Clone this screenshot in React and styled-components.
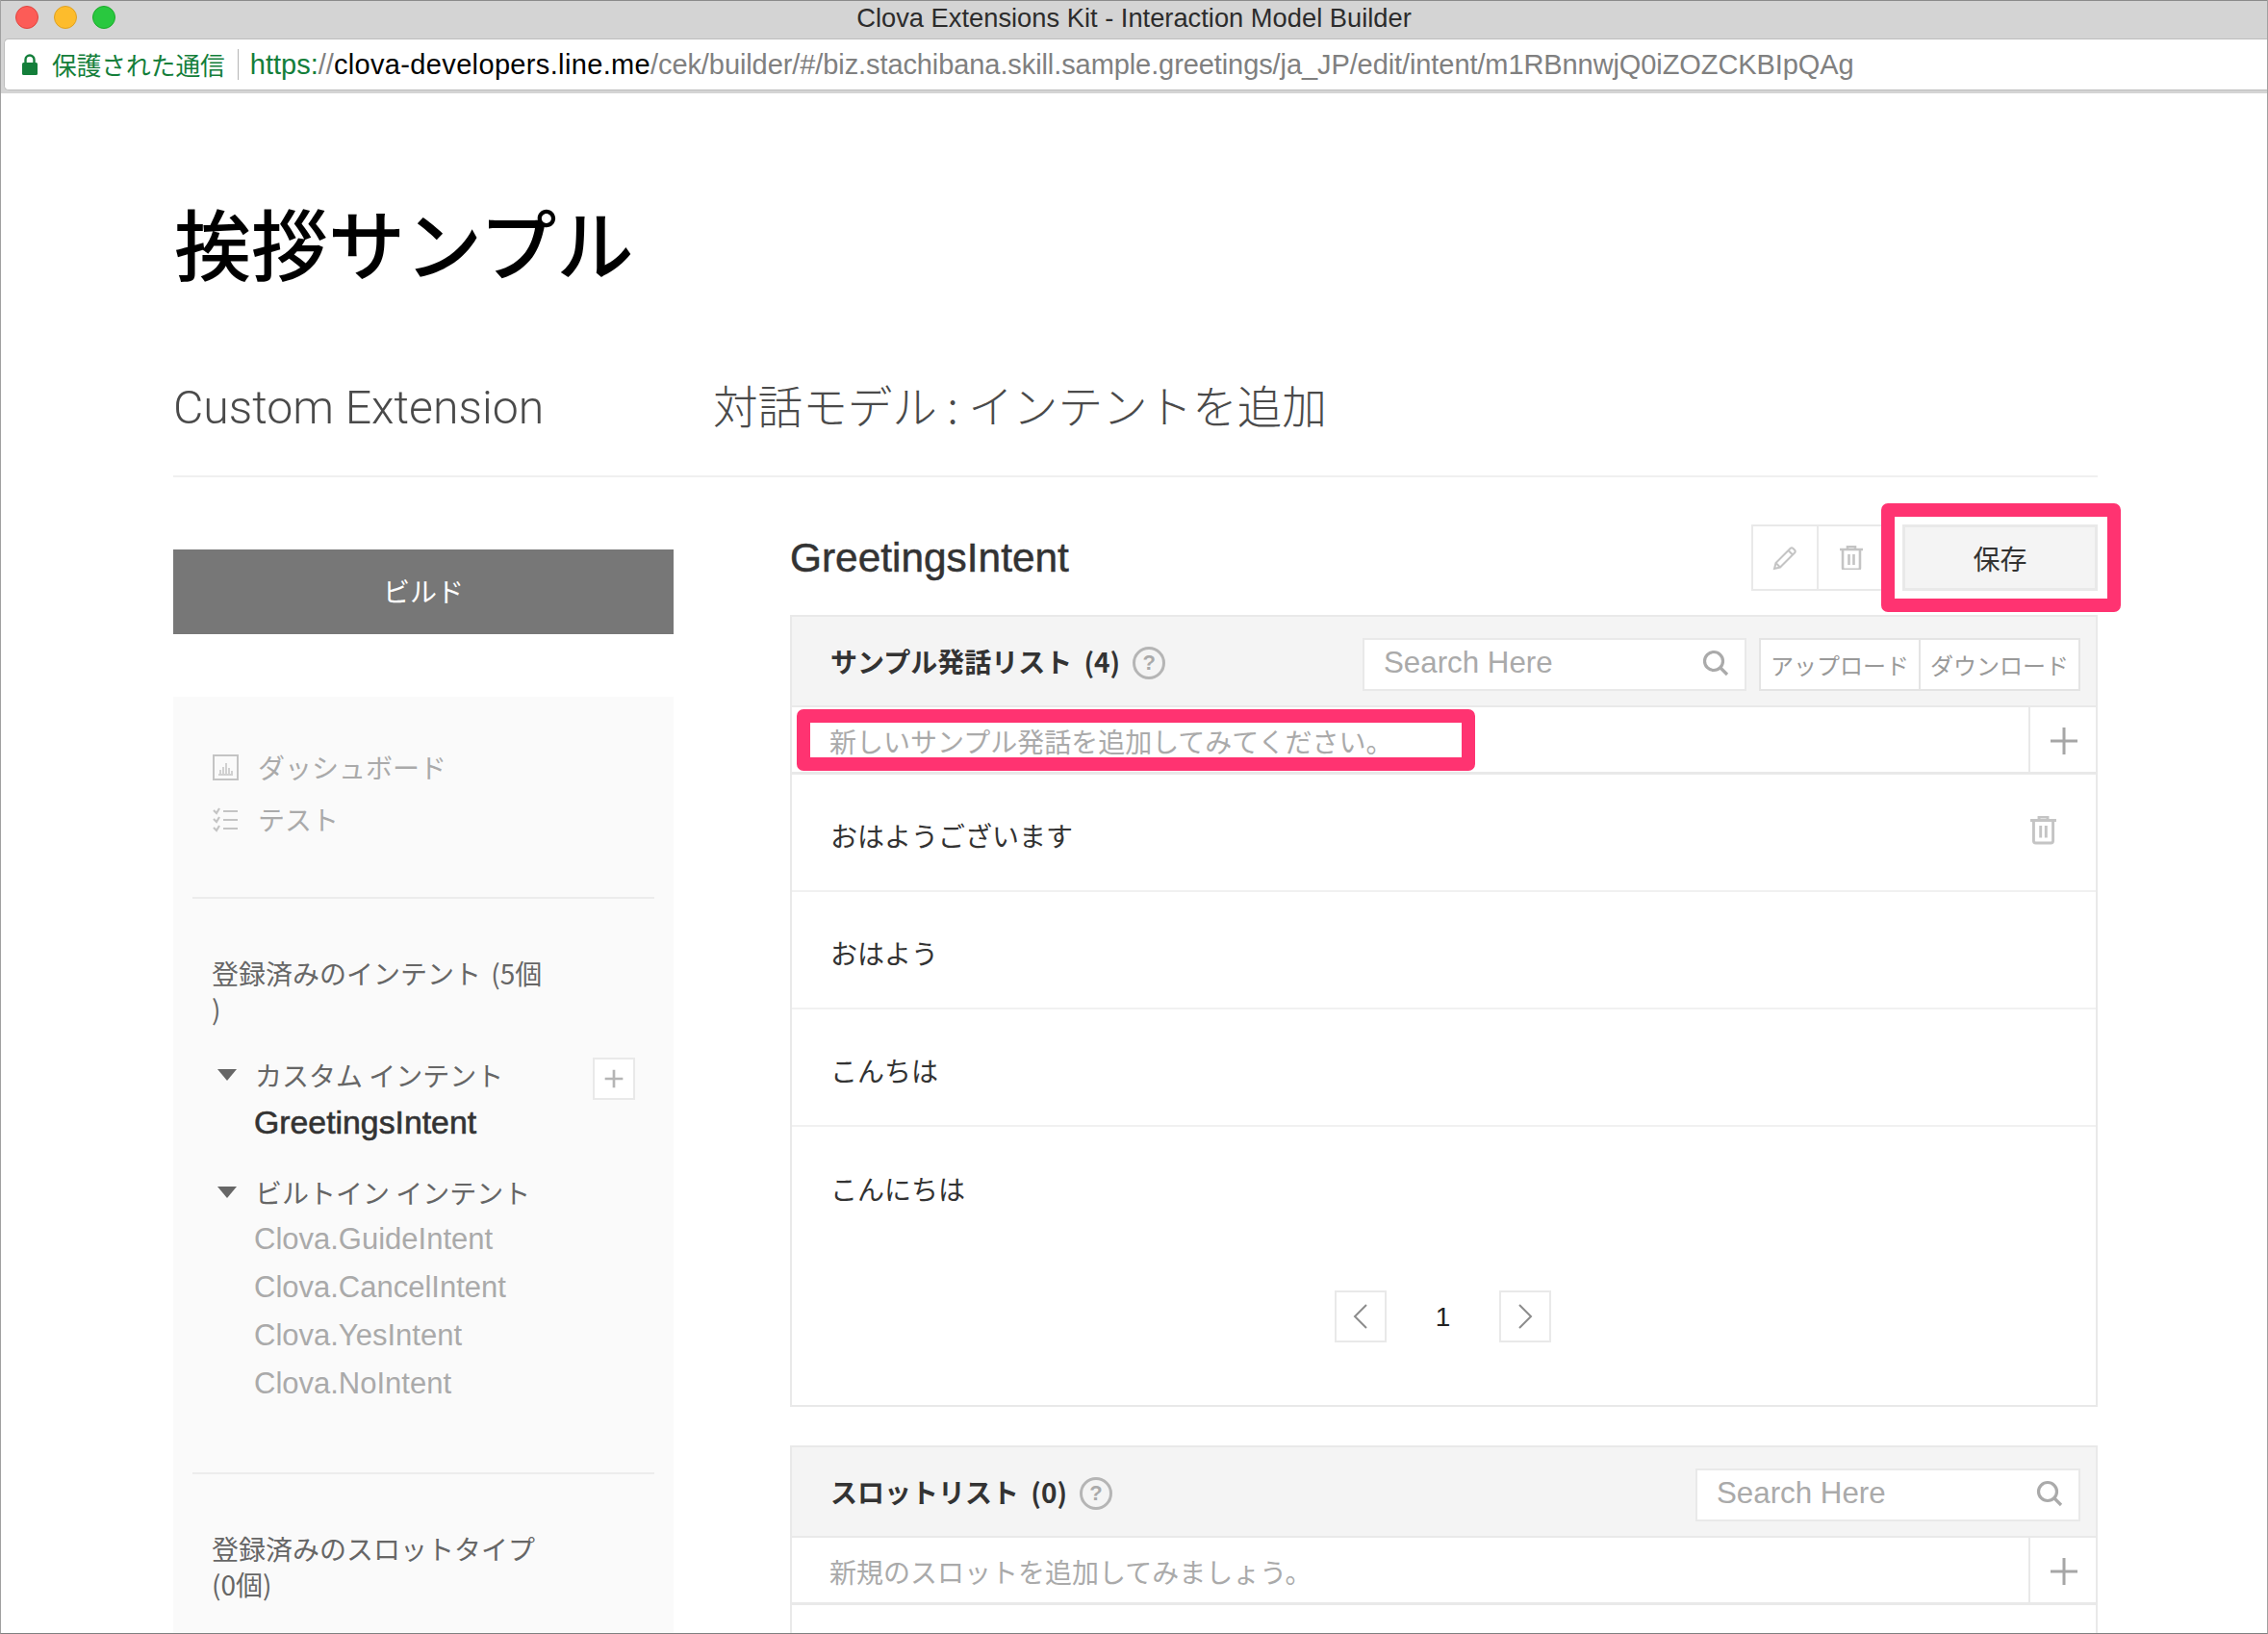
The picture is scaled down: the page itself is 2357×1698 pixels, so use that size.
import React from "react";
import styled, { createGlobalStyle } from "styled-components";

const SANS = `"Liberation Sans", "Noto Sans CJK JP", sans-serif`;
const JP = `"Noto Sans CJK JP", "Liberation Sans", sans-serif`;
const LINE = "#e9e9e9";

const Global = createGlobalStyle`
  html, body { margin: 0; padding: 0; background: #fff; }
  * { box-sizing: border-box; }
  body { font-family: ${SANS}; overflow: hidden; }
`;

const Win = styled.div`
  position: relative;
  width: 2357px;
  height: 1698px;
  overflow: hidden;
  background: #fff;
  display: flex;
  flex-direction: column;
  border-left: 1px solid #a0a0a0;
  border-right: 1px solid #a0a0a0;
  border-bottom: 1px solid #808080;
`;
const TitleBar = styled.div`
  height: 40px;
  flex: none;
  background: #d4d4d4;
  border-top: 1px solid #8a8a8a;
  display: flex;
  align-items: center;
  padding-left: 15px;
  position: relative;
`;
const Light = styled.span`
  width: 24px;
  height: 24px;
  margin-top: -6px;
  border-radius: 50%;
  margin-right: 16px;
  background: ${(p) => p.$c};
  border: 1px solid ${(p) => p.$b};
`;
const WinTitle = styled.div`
  position: absolute;
  left: 0;
  right: 0;
  top: 0;
  height: 36px;
  line-height: 36px;
  text-align: center;
  font-size: 27.3px;
  color: #2c2c2c;
`;
const AddrWrap = styled.div`
  flex: none;
  height: 57px;
  background: #d4d4d4;
  padding: 0 0 3px 3px;
`;
const Addr = styled.div`
  height: 54px;
  background: #fff;
  border: 1px solid #bdbdbd;
  border-radius: 5px 0 0 5px;
  border-right: none;
  display: flex;
  align-items: center;
  padding-left: 18px;
  font-size: 29px;
  white-space: nowrap;
`;
const Secure = styled.span`
  font-family: ${JP};
  font-size: 25.7px;
  color: #137e3a;
  margin-left: 15px;
  margin-top: -2px;
`;
const Sep = styled.span`
  width: 1px;
  height: 32px;
  background: #b5b5b5;
  margin: 0 12px 0 13px;
`;
const UrlText = styled.span`
  margin-top: 1px;
`;
const Url = styled.span`
  color: ${(p) => p.$c};
  letter-spacing: ${(p) => p.$ls || 0}px;
`;

const Content = styled.div`
  flex: 1;
  min-height: 0;
  padding: 0 176px 0 179px;
  display: flex;
  flex-direction: column;
`;
const PageTitle = styled.h1`
  margin: 0;
  height: 108px;
  margin-top: 99px;
  flex: none;
  font-family: ${JP};
  font-size: 80px;
  line-height: 108px;
  font-weight: 500;
  color: #000;
  padding-left: 1px;
`;
const Crumbs = styled.div`
  flex: none;
  height: 192px;
  padding-top: 48px;
  border-bottom: 2px solid #f0f0f0;
  display: flex;
  align-items: center;
`;
const CrumbA = styled.div`
  width: 561px;
  font-family: Roboto, ${SANS};
  font-weight: 300;
  font-size: 48.2px;
  color: #4a4a4a;
`;
const CrumbB = styled.div`
  margin-top: -8px;
  font-family: ${JP};
  font-weight: 300;
  font-size: 46.6px;
  color: #4a4a4a;
`;
const Columns = styled.div`
  display: flex;
  gap: 120px;
  flex: 1;
  min-height: 0;
`;
const Side = styled.aside`
  width: 520px;
  flex: none;
  padding-top: 75px;
  margin-right: 1px;
  display: flex;
  flex-direction: column;
`;
const Build = styled.div`
  height: 88px;
  background: #777;
  color: #fff;
  display: flex;
  align-items: center;
  justify-content: center;
  font-family: ${JP};
  font-size: 28px;
  padding-bottom: 2px;
  flex: none;
`;
const SidePanel = styled.div`
  margin-top: 65px;
  flex: 1;
  background: #fafafa;
  padding: 0 20px;
`;
const NavList = styled.div`
  height: 210px;
  padding: 55px 0 0 21px;
  border-bottom: 2px solid #ececec;
`;
const NavItem = styled.div`
  display: flex;
  align-items: center;
  height: 36px;
  margin-bottom: 18px;
  font-family: ${JP};
  font-size: 28px;
  color: #aaa;
  gap: 20px;
`;
const NavIcon = styled.svg`
  width: 27px;
  height: 27px;
  flex: none;
`;
const SideSection = styled.div`
  padding: 59px 20px 0 20px;
`;
const SideHead = styled.div`
  width: 360px;
  font-family: ${JP};
  font-size: 28px;
  line-height: 37px;
  color: #666;
  word-spacing: 4px;
`;
const Group = styled.div`
  margin-top: ${(p) => p.$mt}px;
  position: relative;
`;
const GroupHead = styled.div`
  display: flex;
  align-items: center;
  height: 48px;
  font-family: ${JP};
  font-size: 28px;
  color: #666;
  word-spacing: 0;
`;
const Tri = styled.span`
  width: 0;
  height: 0;
  margin: 0 19px 0 6px;
  border-left: 10px solid transparent;
  border-right: 10px solid transparent;
  border-top: 12px solid #666;
`;
const Intent = styled.div`
  height: ${(p) => (p.$active ? "49px" : "50px")};
  line-height: ${(p) => (p.$active ? "50px" : "50px")};
  padding-left: 44px;
  font-family: ${SANS};
  font-size: ${(p) => (p.$active ? "33.8px" : "31px")};
  color: ${(p) => (p.$active ? "#333" : "#aaa")};
  -webkit-text-stroke: ${(p) => (p.$active ? "0.6px #333" : "0")};
`;
const MiniPlus = styled.div`
  position: absolute;
  right: 0;
  top: 6px;
  width: 44px;
  height: 44px;
  background: #fff;
  border: 2px solid #e9e9e9;
  display: flex;
  align-items: center;
  justify-content: center;
`;
const SideRule = styled.div`
  height: 2px;
  background: #ececec;
  margin-top: 67px;
`;

const Main = styled.main`
  flex: 1;
  min-width: 0;
  padding-top: 49px;
`;
const MainHead = styled.div`
  display: flex;
  align-items: center;
  justify-content: space-between;
  height: 69px;
`;
const Name = styled.h2`
  margin: 0;
  font-family: ${SANS};
  font-size: 42.4px;
  font-weight: 400;
  color: #333;
  -webkit-text-stroke: 0.5px #333;
`;
const Actions = styled.div`
  display: flex;
  height: 69px;
`;
const IconBtn = styled.div`
  width: ${(p) => p.$w}px;
  height: 69px;
  border: 2px solid ${LINE};
  border-right: ${(p) => (p.$open ? "none" : `2px solid ${LINE}`)};
  margin-right: ${(p) => (p.$open ? "0" : "-2px")};
  display: flex;
  align-items: center;
  justify-content: center;
  background: #fff;
`;
const SaveBtn = styled.div`
  width: 203px;
  height: 69px;
  margin-left: 20px;
  background: #f4f4f4;
  border: 3px solid ${LINE};
  display: flex;
  align-items: center;
  justify-content: center;
  font-family: ${JP};
  font-size: 28px;
  color: #333;
`;
const Panel = styled.section`
  margin-top: ${(p) => p.$mt}px;
  border: 2px solid ${LINE};
  height: ${(p) => p.$h || "auto"};
`;
const PanelHead = styled.div`
  height: 94px;
  background: #f4f4f4;
  border-bottom: 2px solid ${LINE};
  display: flex;
  align-items: center;
  padding: 0 16px 0 40px;
`;
const PanelTitle = styled.div`
  font-family: ${JP};
  font-size: 28px;
  font-weight: 700;
  color: #333;
  white-space: nowrap;
  word-spacing: 6px;
`;
const Help = styled.span`
  width: 34px;
  height: 34px;
  margin: 3px 0 0 13px;
  border-radius: 50%;
  border: 3px solid #b5b5b5;
  color: #aaa;
  font-size: 22px;
  font-weight: 700;
  display: flex;
  align-items: center;
  justify-content: center;
`;
const Spacer = styled.div`
  flex: 1;
`;
const SearchBox = styled.div`
  width: ${(p) => p.$w}px;
  height: 55px;
  margin-top: 6px;
  background: #fff;
  border: 2px solid ${LINE};
  display: flex;
  align-items: center;
  justify-content: space-between;
  padding: 0 16px 2px 20px;
  font-size: 31.3px;
  color: #aaa;
`;
const FileBtns = styled.div`
  display: flex;
  margin: 6px 0 0 13px;
  height: 55px;
  width: 334px;
  border: 2px solid #e4e4e4;
  background: #fff;
`;
const FileBtn = styled.div`
  flex: 1;
  display: flex;
  align-items: center;
  justify-content: center;
  font-family: ${JP};
  font-size: 24px;
  color: #999;
  white-space: nowrap;
  & + & {
    border-left: 2px solid #e4e4e4;
  }
`;
const AddRow = styled.div`
  height: 70px;
  border-bottom: 3px solid ${LINE};
  display: flex;
  align-items: center;
`;
const AddText = styled.div`
  flex: 1;
  padding: 3px 0 0 39px;
  font-family: ${JP};
  font-size: 28px;
  color: #aaa;
`;
const AddBtn = styled.div`
  width: 70px;
  height: 100%;
  padding: 2px 0 0 1px;
  border-left: 2px solid ${LINE};
  display: flex;
  align-items: center;
  justify-content: center;
`;
const Row = styled.div`
  height: 122px;
  display: flex;
  align-items: center;
  justify-content: space-between;
  padding: 6px 41px 0 40px;
  border-bottom: ${(p) => (p.$last ? "none" : "2px solid #f1f1f1")};
  font-family: ${JP};
  font-size: 28px;
  color: #333;
`;
const RowTrash = styled.span`
  margin-top: -10px;
  display: flex;
`;
const Pager = styled.div`
  display: flex;
  align-items: center;
  justify-content: center;
  height: 54px;
  margin-top: 48px;
  margin-bottom: 65px;
  padding-right: 2px;
`;
const PageBtn = styled.div`
  width: 54px;
  height: 54px;
  border: 2px solid ${LINE};
  display: flex;
  align-items: center;
  justify-content: center;
`;
const PageNum = styled.div`
  width: 117px;
  text-align: center;
  font-size: 28px;
  color: #222;
  padding-top: 2px;
`;

const Overlay = styled.div`
  position: absolute;
  left: ${(p) => p.$x}px;
  top: ${(p) => p.$y}px;
  width: ${(p) => p.$w}px;
  height: ${(p) => p.$h}px;
  border: 14px solid #ff3371;
  border-radius: 7px;
  pointer-events: none;
`;

const Plus = ({ s = 30, c = "#a6a6a6", w = 3 }) => (
  <svg width={s} height={s} viewBox="0 0 30 30">
    <path d="M15 1v28M1 15h28" stroke={c} strokeWidth={w} fill="none" />
  </svg>
);
const Trash = ({ s = 24, c = "#c4c4c4" }) => (
  <svg width={s} height={s * 1.08} viewBox="0 0 24 26" fill="none" stroke={c} strokeWidth="2.6">
    <path d="M0 4h24M8 4V1h8v3M3 4v19q0 2 2 2h14q2 0 2-2V4M9.5 9v11M14.5 9v11" />
  </svg>
);
const Pencil = () => (
  <svg width="26" height="26" viewBox="0 0 26 26" fill="none" stroke="#c4c4c4" strokeWidth="2">
    <path d="M2 24l1.500-6L18.500 3q1.500-1.500 3 0l1.500 1.500q1.500 1.500 0 3L8 22.500zM3.500 18L8 22.500M16.500 5l4.500 4.500" />
  </svg>
);
const Mag = () => (
  <svg width="28" height="28" viewBox="0 0 28 28" fill="none" stroke="#aaa" strokeWidth="3.200">
    <circle cx="12" cy="12" r="9.500" />
    <path d="M19 19l7 7" />
  </svg>
);
const Chevron = ({ left }) => (
  <svg width="16" height="26" viewBox="0 0 16 26" fill="none" stroke="#8c8c8c" strokeWidth="2">
    <path d={left ? "M14 1L2 13l12 12" : "M2 1l12 12L2 25"} />
  </svg>
);
const Lock = () => (
  <svg width="16" height="22" viewBox="0 0 16 22">
    <path d="M3.500 10V6a4.500 4.500 0 0 1 9 0v4" fill="none" stroke="#137e3a" strokeWidth="2.400" />
    <rect x="0" y="9" width="16" height="13" rx="1.500" fill="#137e3a" />
  </svg>
);

const utterances = ["おはようございます", "おはよう", "こんちは", "こんにちは"];
const builtins = ["Clova.GuideIntent", "Clova.CancelIntent", "Clova.YesIntent", "Clova.NoIntent"];

export default function App() {
  return (
    <Win>
      <Global />
      <TitleBar>
        <Light $c="#fc5c57" $b="#e0443e" />
        <Light $c="#fdbc2c" $b="#dea123" />
        <Light $c="#29c83f" $b="#1aab29" />
        <WinTitle>Clova Extensions Kit - Interaction Model Builder</WinTitle>
      </TitleBar>
      <AddrWrap>
        <Addr>
          <Lock />
          <Secure>保護された通信</Secure>
          <Sep />
          <UrlText>
            <Url $c="#137e3a">https:</Url>
            <Url $c="#808080">//</Url>
            <Url $c="#000" $ls={0.35}>clova-developers.line.me</Url>
            <Url $c="#808080" $ls={-0.09}>/cek/builder/#/biz.stachibana.skill.sample.greetings/ja_JP/edit/intent/m1RBnnwjQ0iZOZCKBIpQAg</Url>
          </UrlText>
        </Addr>
      </AddrWrap>
      <Content>
        <PageTitle>挨拶サンプル</PageTitle>
        <Crumbs>
          <CrumbA>Custom Extension</CrumbA>
          <CrumbB>対話モデル : インテントを追加</CrumbB>
        </Crumbs>
        <Columns>
          <Side>
            <Build>ビルド</Build>
            <SidePanel>
              <NavList>
                <NavItem>
                  <NavIcon viewBox="0 0 27 27" fill="none" stroke="#c4c4c4" strokeWidth="2">
                    <rect x="1" y="1" width="25" height="25" />
                    <path d="M6 21h15M8 20v-4M11 20v-7M14 20V9M17 20v-6M20 20v-3" strokeWidth="1.500" />
                  </NavIcon>
                  ダッシュボード
                </NavItem>
                <NavItem>
                  <NavIcon viewBox="0 0 27 27" fill="none" stroke="#c4c4c4" strokeWidth="2.200">
                    <path d="M1 4l3 3 3-5M1 13l3 3 3-5M1 22l3 3 3-5M11 5h15M11 14h15M11 23h15" />
                  </NavIcon>
                  テスト
                </NavItem>
              </NavList>
              <SideSection>
                <SideHead>
                  登録済みのインテント (5個
                  <br />)
                </SideHead>
                <Group $mt={26}>
                  <GroupHead>
                    <Tri />
                    カスタム インテント
                  </GroupHead>
                  <MiniPlus>
                    <Plus s={20} c="#b5b5b5" w={4} />
                  </MiniPlus>
                  <Intent $active>GreetingsIntent</Intent>
                </Group>
                <Group $mt={25}>
                  <GroupHead>
                    <Tri />
                    ビルトイン インテント
                  </GroupHead>
                  {builtins.map((b) => (
                    <Intent key={b}>{b}</Intent>
                  ))}
                </Group>
              </SideSection>
              <SideRule />
              <SideSection>
                <SideHead>登録済みのスロットタイプ (0個)</SideHead>
              </SideSection>
            </SidePanel>
          </Side>
          <Main>
            <MainHead>
              <Name>GreetingsIntent</Name>
              <Actions>
                <IconBtn $w={70}>
                  <Pencil />
                </IconBtn>
                <IconBtn $w={69} $open>
                  <Trash />
                </IconBtn>
                <SaveBtn>保存</SaveBtn>
              </Actions>
            </MainHead>
            <Panel $mt={25}>
              <PanelHead>
                <PanelTitle>サンプル発話リスト (4)</PanelTitle>
                <Help>?</Help>
                <Spacer />
                <SearchBox $w={399}>
                  Search Here
                  <Mag />
                </SearchBox>
                <FileBtns>
                  <FileBtn>アップロード</FileBtn>
                  <FileBtn>ダウンロード</FileBtn>
                </FileBtns>
              </PanelHead>
              <AddRow>
                <AddText>新しいサンプル発話を追加してみてください。</AddText>
                <AddBtn>
                  <Plus />
                </AddBtn>
              </AddRow>
              {utterances.map((u, i) => (
                <Row key={u} $last={i === 3}>
                  {u}
                  {i === 0 && (
                    <RowTrash>
                      <Trash s={27} />
                    </RowTrash>
                  )}
                </Row>
              ))}
              <Pager>
                <PageBtn>
                  <Chevron left />
                </PageBtn>
                <PageNum>1</PageNum>
                <PageBtn>
                  <Chevron />
                </PageBtn>
              </Pager>
            </Panel>
            <Panel $mt={40} $h="400px">
              <PanelHead>
                <PanelTitle>スロットリスト (0)</PanelTitle>
                <Help>?</Help>
                <Spacer />
                <SearchBox $w={400}>
                  Search Here
                  <Mag />
                </SearchBox>
              </PanelHead>
              <AddRow>
                <AddText>新規のスロットを追加してみましょう。</AddText>
                <AddBtn>
                  <Plus />
                </AddBtn>
              </AddRow>
            </Panel>
          </Main>
        </Columns>
      </Content>
      <Overlay $x={1954} $y={523} $w={249} $h={113} />
      <Overlay $x={827} $y={737} $w={705} $h={64} />
    </Win>
  );
}
